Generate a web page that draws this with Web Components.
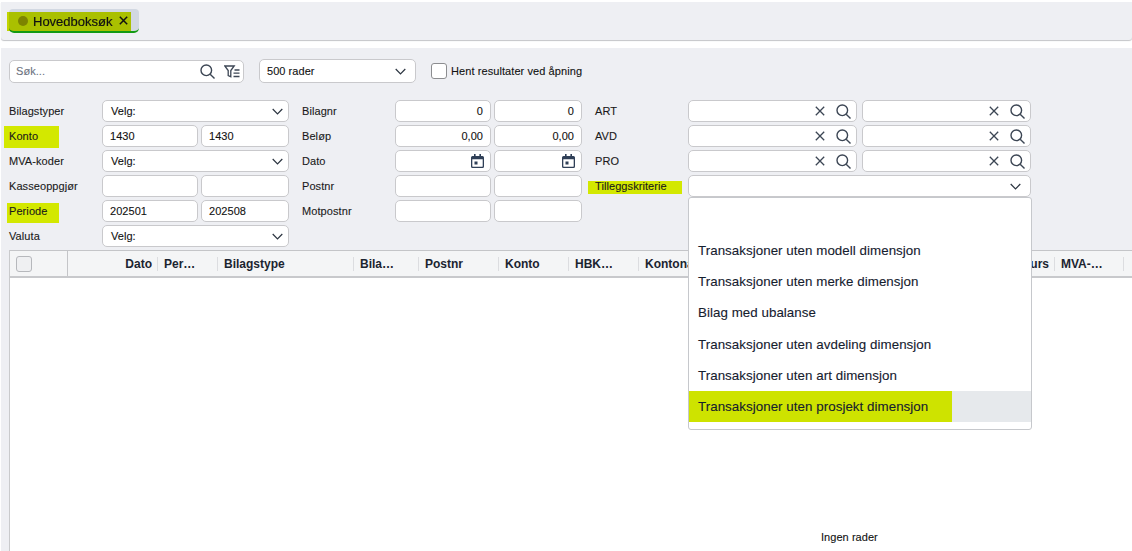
<!DOCTYPE html>
<html lang="no"><head><meta charset="utf-8"><title>Hovedboksøk</title>
<style>
html,body{margin:0;padding:0;height:100%;overflow:hidden;background:#fff}
body{font:12px "Liberation Sans",Arial,sans-serif;color:#1a1a1a;width:1132px;height:551px;display:flex;flex-direction:column;position:relative}
</style></head><body>
<app-tabbar></app-tabbar>
<app-panel></app-panel>
<script>
const ICON={
 search:'<svg width="15" height="15" viewBox="0 0 15 15" fill="none" stroke="#3c4654" stroke-width="1.4"><circle cx="6.300" cy="6.300" r="5.300"/><path d="M10.200 10.200 14.500 14.500"/></svg>',
 x:'<svg width="10" height="10" viewBox="0 0 10 10" fill="none" stroke="#3c4654" stroke-width="1.3"><path d="M.8.8l8.400 8.400M9.200.8l-8.400 8.400"/></svg>',
 chev:'<svg width="11" height="7" viewBox="0 0 11 7" fill="none" stroke="#2b3440" stroke-width="1.2"><path d="M.7 1l4.800 4.800L10.300 1"/></svg>',
 cal:'<svg width="13" height="14" viewBox="0 0 13 14"><path fill="#2f3f57" d="M3 0h1.600v2h3.800V0H10v2h1.500A1.500 1.500 0 0 1 13 3.500V12.500A1.500 1.500 0 0 1 11.500 14h-10A1.500 1.500 0 0 1 0 12.500V3.500A1.500 1.500 0 0 1 1.500 2H3zM1.300 5.300v7a.4.4 0 0 0 .4.4h9.600a.4.4 0 0 0 .4-.4v-7z"/><rect x="3.500" y="7.500" width="3" height="3" fill="#2f3f57"/></svg>',
 filter:'<svg width="16" height="13" viewBox="0 0 16 13" fill="none" stroke="#3c4654" stroke-width="1.300"><path d="M.8 1h9.400L6.800 5.500v6.300L4.200 10.500V5.500z"/><path d="M10.500 5h5M9.500 8.200h6M9.500 11.500h6"/></svg>'
};
function def(name,html){customElements.define(name,class extends HTMLElement{
  constructor(){super();this.attachShadow({mode:'open'}).innerHTML=typeof html==='function'?html(this):html;}
});}

def('app-tabbar',`<style>
:host{display:flex;align-items:flex-start;box-sizing:border-box;height:38px;margin:2px 0 0 1px;background:#eeeff3;padding:7px 0 0 8px;box-shadow:0 1px 1px #c4c5c8;flex:none;border-radius:0 0 3px 3px}
.tab{position:relative;box-sizing:border-box;height:24px;width:130px;background:#d2d8e2;border-radius:4px 4px 5px 5px;border-bottom:2px solid #139a13;display:flex;align-items:center;gap:5px;padding:2px 0 0 9px;font-size:13px;color:#111;-webkit-text-stroke:.2px #111}
.hl{position:absolute;left:-2px;top:3px;width:124px;height:19px;background:#cfe300;mix-blend-mode:multiply}
.dot{width:10px;height:10px;border-radius:50%;background:#7d8400;position:relative}
span,svg{position:relative}
</style><div class="tab"><div class="hl"></div><span class="dot"></span><span>Hovedboksøk</span><svg style="margin-left:1.500px;top:-1px" width="9" height="9" viewBox="0 0 9 9" fill="none" stroke="#111" stroke-width="1.500"><path d="M.8.8l7.400 7.400M8.200.8 .8 8.200"/></svg></div>`);

def('app-field',t=>{
 const k=t.getAttribute('kind')||'text',v=t.getAttribute('value')||'',ph=t.getAttribute('ph');
 let inner='';
 if(k==='text')inner=`<span class="v t">${v}</span>`;
 if(k==='num')inner=`<span class="v r">${v}</span>`;
 if(k==='date')inner=`<span class="sp"></span><span class="ic cal">${ICON.cal}</span>`;
 if(k==='select')inner=`<span class="v">${v}</span><span class="sp"></span><span class="ic ch">${ICON.chev}</span>`;
 if(k==='lookup')inner=`<span class="sp"></span><span class="ic lx">${ICON.x}</span><span class="ic ls">${ICON.search}</span>`;
 if(k==='search')inner=`<span class="v ph">${ph}</span><span class="sp"></span><span class="ic">${ICON.search}</span><span class="ic fl">${ICON.filter}</span>`;
 return `<style>
 :host{display:flex;box-sizing:border-box;height:22px;background:#fff;border:1px solid #c9c9cc;border-radius:5px;align-items:center;padding:0 8px;min-width:0;font-size:11px;color:#111;letter-spacing:.05px;-webkit-text-stroke:.1px currentColor}
 .v{white-space:nowrap}.t{margin-left:-1px}.r{margin-left:auto;margin-right:-1px}.sp{flex:1}
 .ph{color:#6b7280}.ic{display:flex;align-items:center}
 .lx{margin-right:11px}.ls{margin-right:-3px}.fl{margin-left:9px;margin-right:-5px}.ch{margin-right:var(--cm,1px)}.cal{margin-right:-2px}
 </style>${inner}`;
});

def('app-label',`<style>:host{display:flex;align-items:center;font-size:11px;letter-spacing:.08px;color:#1a1a1a;white-space:nowrap;height:22px;position:relative;-webkit-text-stroke:.1px currentColor}
.hl{display:none;position:absolute;background:#d3e800}
:host([hl]) .hl{display:block;left:var(--l);right:var(--r);top:var(--t);bottom:var(--b)}
span{position:relative}</style><div class="hl"></div><span><slot></slot></span>`);

def('filter-grid',`<style>:host{display:grid;grid-template-columns:93px 99px 88px 13px 93px 99px 88px 13px 93px 174px 169px;row-gap:3px;grid-auto-rows:22px}
</style><slot></slot>`);

def('tilleggs-menu',`<style>
:host{position:absolute;left:688px;top:197px;width:344px;height:233px;box-sizing:border-box;background:#fff;border:1px solid #c6c8cc;border-radius:3px;padding-top:37px;font-size:13.330px;letter-spacing:.05px;color:#15202e;z-index:5;display:flex;flex-direction:column;-webkit-text-stroke:.1px currentColor}
</style><slot></slot>`);
def('menu-item',`<style>
:host{display:flex;align-items:center;height:31.200px;flex:none;padding-left:9px}
:host([active]){background:linear-gradient(90deg,#cee300 0,#cee300 263px,#e6e9ec 263px)}
</style><slot></slot>`);

def('data-table',t=>{
 const cols=[['Dato',158,'r'],['Per…',218],['Bilagstype',354],['Bila…',419],['Postnr',499],['Konto',569],['HBK…',639],['Kontonavn',1020],['Kurs',1055,'r'],['MVA-…',1124]];
 let x=68,h='';
 for(const[c,e,al] of cols){h+=`<div class="c ${al||''}" style="flex:0 0 ${e-x}px">${c}</div>`;x=e;}
 return `<style>
 :host{display:flex;flex-direction:column;flex:1;min-height:0;margin-left:8px;background:#fff;border-left:1px solid #c9cacc;position:relative;min-width:0}
 .hd{display:flex;height:28px;box-sizing:border-box;background:#f4f5f6;border-top:1px solid #c4c5c8;border-bottom:2px solid #c8c9cc;align-items:center;flex:none;font-weight:700;font-size:12px;color:#1b2430;overflow:hidden}
 .ck{flex:0 0 58px;height:100%;display:flex;align-items:center;padding-left:6px;box-sizing:border-box;border-right:1px solid #c4c5c8}
 .ck i{display:block;box-sizing:border-box;width:16px;height:16px;border:1px solid #b6b8bc;border-radius:3px;background:#eff0f2}
 .c{box-sizing:border-box;padding:0 6px;white-space:nowrap;overflow:hidden;height:14px;line-height:14px;border-right:1px solid #dcdde0}
 .r{text-align:right;padding:0 5px 0 0}
 .body{flex:1;position:relative}
 .empty{position:absolute;left:811px;top:253px;font-size:11px;letter-spacing:.05px;color:#111;-webkit-text-stroke:.1px currentColor}
 </style><div class="hd"><div class="ck"><i></i></div>${h}</div><div class="body"><div class="empty">Ingen rader</div></div>`;
});

def('app-panel',`<style>
:host{display:flex;flex-direction:column;flex:1;min-height:0;margin:8px 0 0 1px;background:#eeeff3;position:relative;min-width:0}
.top{display:flex;align-items:center;height:24px;margin:11px 0 0 8px;flex:none}
.grid{margin:17px 0 3px 8px;flex:none}
app-field.search{width:235px;height:23px;padding-left:6px}
app-field.rows{width:157px;height:24px;margin-left:15px;padding-left:7px}
.chk{display:flex;align-items:center;margin-left:15px;font-size:11px;letter-spacing:.08px;gap:4px;color:#111;-webkit-text-stroke:.1px currentColor}
.chk i{display:block;box-sizing:border-box;width:16px;height:16px;background:#fff;border:1px solid #8c8d90;border-radius:3px}
app-field.a{margin-right:3px}app-field.b{margin-right:5px}
.wide{grid-column:span 2}.sel{--cm:-3px}
</style>
<div class="top"><app-field class="search" kind="search" ph="Søk..."></app-field><app-field class="rows" kind="select" value="500 rader"></app-field><div class="chk"><i></i><span>Hent resultater ved åpning</span></div></div>
<filter-grid class="grid">
<app-label>Bilagstyper</app-label><app-field class="wide sel" kind="select" value="Velg:"></app-field><span></span>
<app-label>Bilagnr</app-label><app-field class="a" kind="num" value="0"></app-field><app-field kind="num" value="0"></app-field><span></span>
<app-label>ART</app-label><app-field class="b" kind="lookup"></app-field><app-field kind="lookup"></app-field>

<app-label hl style="--l:-5px;--r:43px;--t:1px;--b:-1px">Konto</app-label><app-field class="a" kind="text" value="1430"></app-field><app-field kind="text" value="1430"></app-field><span></span>
<app-label>Beløp</app-label><app-field class="a" kind="num" value="0,00"></app-field><app-field kind="num" value="0,00"></app-field><span></span>
<app-label>AVD</app-label><app-field class="b" kind="lookup"></app-field><app-field kind="lookup"></app-field>

<app-label>MVA-koder</app-label><app-field class="wide sel" kind="select" value="Velg:"></app-field><span></span>
<app-label>Dato</app-label><app-field class="a" kind="date"></app-field><app-field kind="date"></app-field><span></span>
<app-label>PRO</app-label><app-field class="b" kind="lookup"></app-field><app-field kind="lookup"></app-field>

<app-label>Kasseoppgjør</app-label><app-field class="a" kind="text"></app-field><app-field kind="text"></app-field><span></span>
<app-label>Postnr</app-label><app-field class="a" kind="text"></app-field><app-field kind="text"></app-field><span></span>
<app-label hl style="--l:-7px;--r:6px;--t:6px;--b:3px">Tilleggskriterie</app-label><app-field class="wide" kind="select"></app-field>

<app-label hl style="--l:-2px;--r:43px;--t:3px;--b:-1px">Periode</app-label><app-field class="a" kind="text" value="202501"></app-field><app-field kind="text" value="202508"></app-field><span></span>
<app-label>Motpostnr</app-label><app-field class="a" kind="text"></app-field><app-field kind="text"></app-field><span></span><span></span><span></span><span></span>

<app-label>Valuta</app-label><app-field class="wide sel" kind="select" value="Velg:"></app-field>
</filter-grid>
<data-table></data-table>`);
</script>
<tilleggs-menu>
<menu-item>Transaksjoner uten modell dimensjon</menu-item>
<menu-item>Transaksjoner uten merke dimensjon</menu-item>
<menu-item>Bilag med ubalanse</menu-item>
<menu-item>Transaksjoner uten avdeling dimensjon</menu-item>
<menu-item>Transaksjoner uten art dimensjon</menu-item>
<menu-item active>Transaksjoner uten prosjekt dimensjon</menu-item>
</tilleggs-menu>
</body></html>
